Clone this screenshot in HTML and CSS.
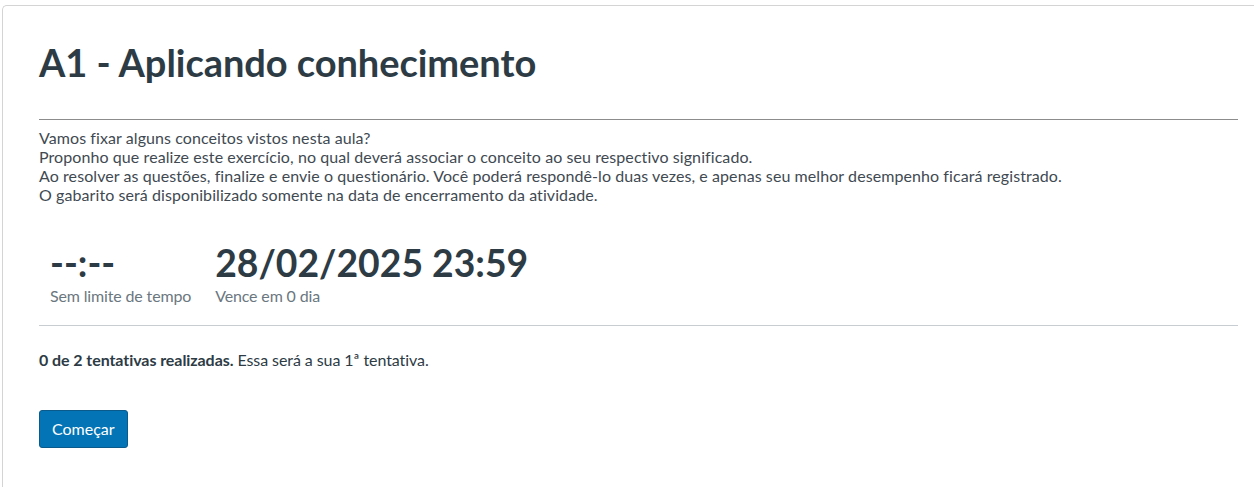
FILE: index.html
```html
<!DOCTYPE html>
<html lang="pt-BR">
<head>
<meta charset="utf-8">
<title>A1 - Aplicando conhecimento</title>
<link rel="stylesheet" href="styles.css">
</head>
<body>
<div class="card">
  <h1 class="title">A1 - Aplicando conhecimento</h1>
  <hr class="rule-dark">
  <div class="desc">
    <p>Vamos fixar alguns conceitos vistos nesta aula?</p>
    <p>Proponho que realize este exercício, no qual deverá associar o conceito ao seu respectivo significado.</p>
    <p>Ao resolver as questões, finalize e envie o questionário. Você poderá respondê-lo duas vezes, e apenas seu melhor desempenho ficará registrado.</p>
    <p>O gabarito será disponibilizado somente na data de encerramento da atividade.</p>
  </div>
  <div class="stats">
    <div class="stat">
      <div class="stat-value">--:--</div>
      <div class="stat-label">Sem limite de tempo</div>
    </div>
    <div class="stat">
      <div class="stat-value">28/02/2025 23:59</div>
      <div class="stat-label">Vence em 0 dia</div>
    </div>
  </div>
  <hr class="rule-light">
  <p class="attempts"><strong>0 de 2 tentativas realizadas.</strong> Essa será a sua 1ª tentativa.</p>
  <button class="btn-primary" type="button">Começar</button>
</div>
</body>
</html>
```
FILE: styles.css
```css
* { box-sizing: border-box; }
html, body { margin: 0; padding: 0; background: #fff; }
body {
  font-family: Lato, "Noto Sans", sans-serif;
  color: #2d3b45;
  padding: 5px 0 0 2px;
}
.card {
  border-top: 1px solid #d4d4d4;
  border-left: 1px solid #d4d4d4;
  border-top-left-radius: 5px;
  padding: 34px 16px 30px 36px;
  min-height: 500px;
}
.title {
  margin: 0;
  font-size: 38px;
  font-weight: 700;
  line-height: 44px;
  color: #2d3b45;
  letter-spacing: -0.05px;
}
.rule-dark {
  margin: 35px 0 0 0;
  border: 0;
  border-top: 1px solid #8c8c8c;
  height: 0;
}
.desc {
  margin-top: 8px;
  font-size: 16px;
  line-height: 19px;
  color: #3f4a52;
  letter-spacing: 0.08px;
}
.desc p { margin: 0; }
.stats {
  display: flex;
  gap: 24px;
  margin-top: 38px;
  padding-left: 11px;
}
.stat-value {
  font-size: 37.3px;
  font-weight: 700;
  line-height: 42px;
  color: #2d3b45;
}
.stat-label {
  margin-top: 2px;
  font-size: 16px;
  line-height: 19px;
  color: #6b7780;
  letter-spacing: -0.15px;
}
.rule-light {
  margin: 20px 0 0 0;
  border: 0;
  border-top: 1px solid #c7cdd1;
  height: 0;
}
.attempts {
  margin: 24px 0 0 0;
  font-size: 16px;
  line-height: 19px;
  color: #2d3b45;
  letter-spacing: -0.07px;
}
.attempts strong { font-weight: 700; }
.btn-primary {
  display: block;
  margin-top: 41px;
  background: #0374b5;
  border: 1px solid #0b5a8c;
  border-radius: 3px;
  color: #fff;
  font-family: Lato, "Noto Sans", sans-serif;
  font-size: 16px;
  line-height: 20px;
  padding: 8px 12px;
  cursor: pointer;
}
```
